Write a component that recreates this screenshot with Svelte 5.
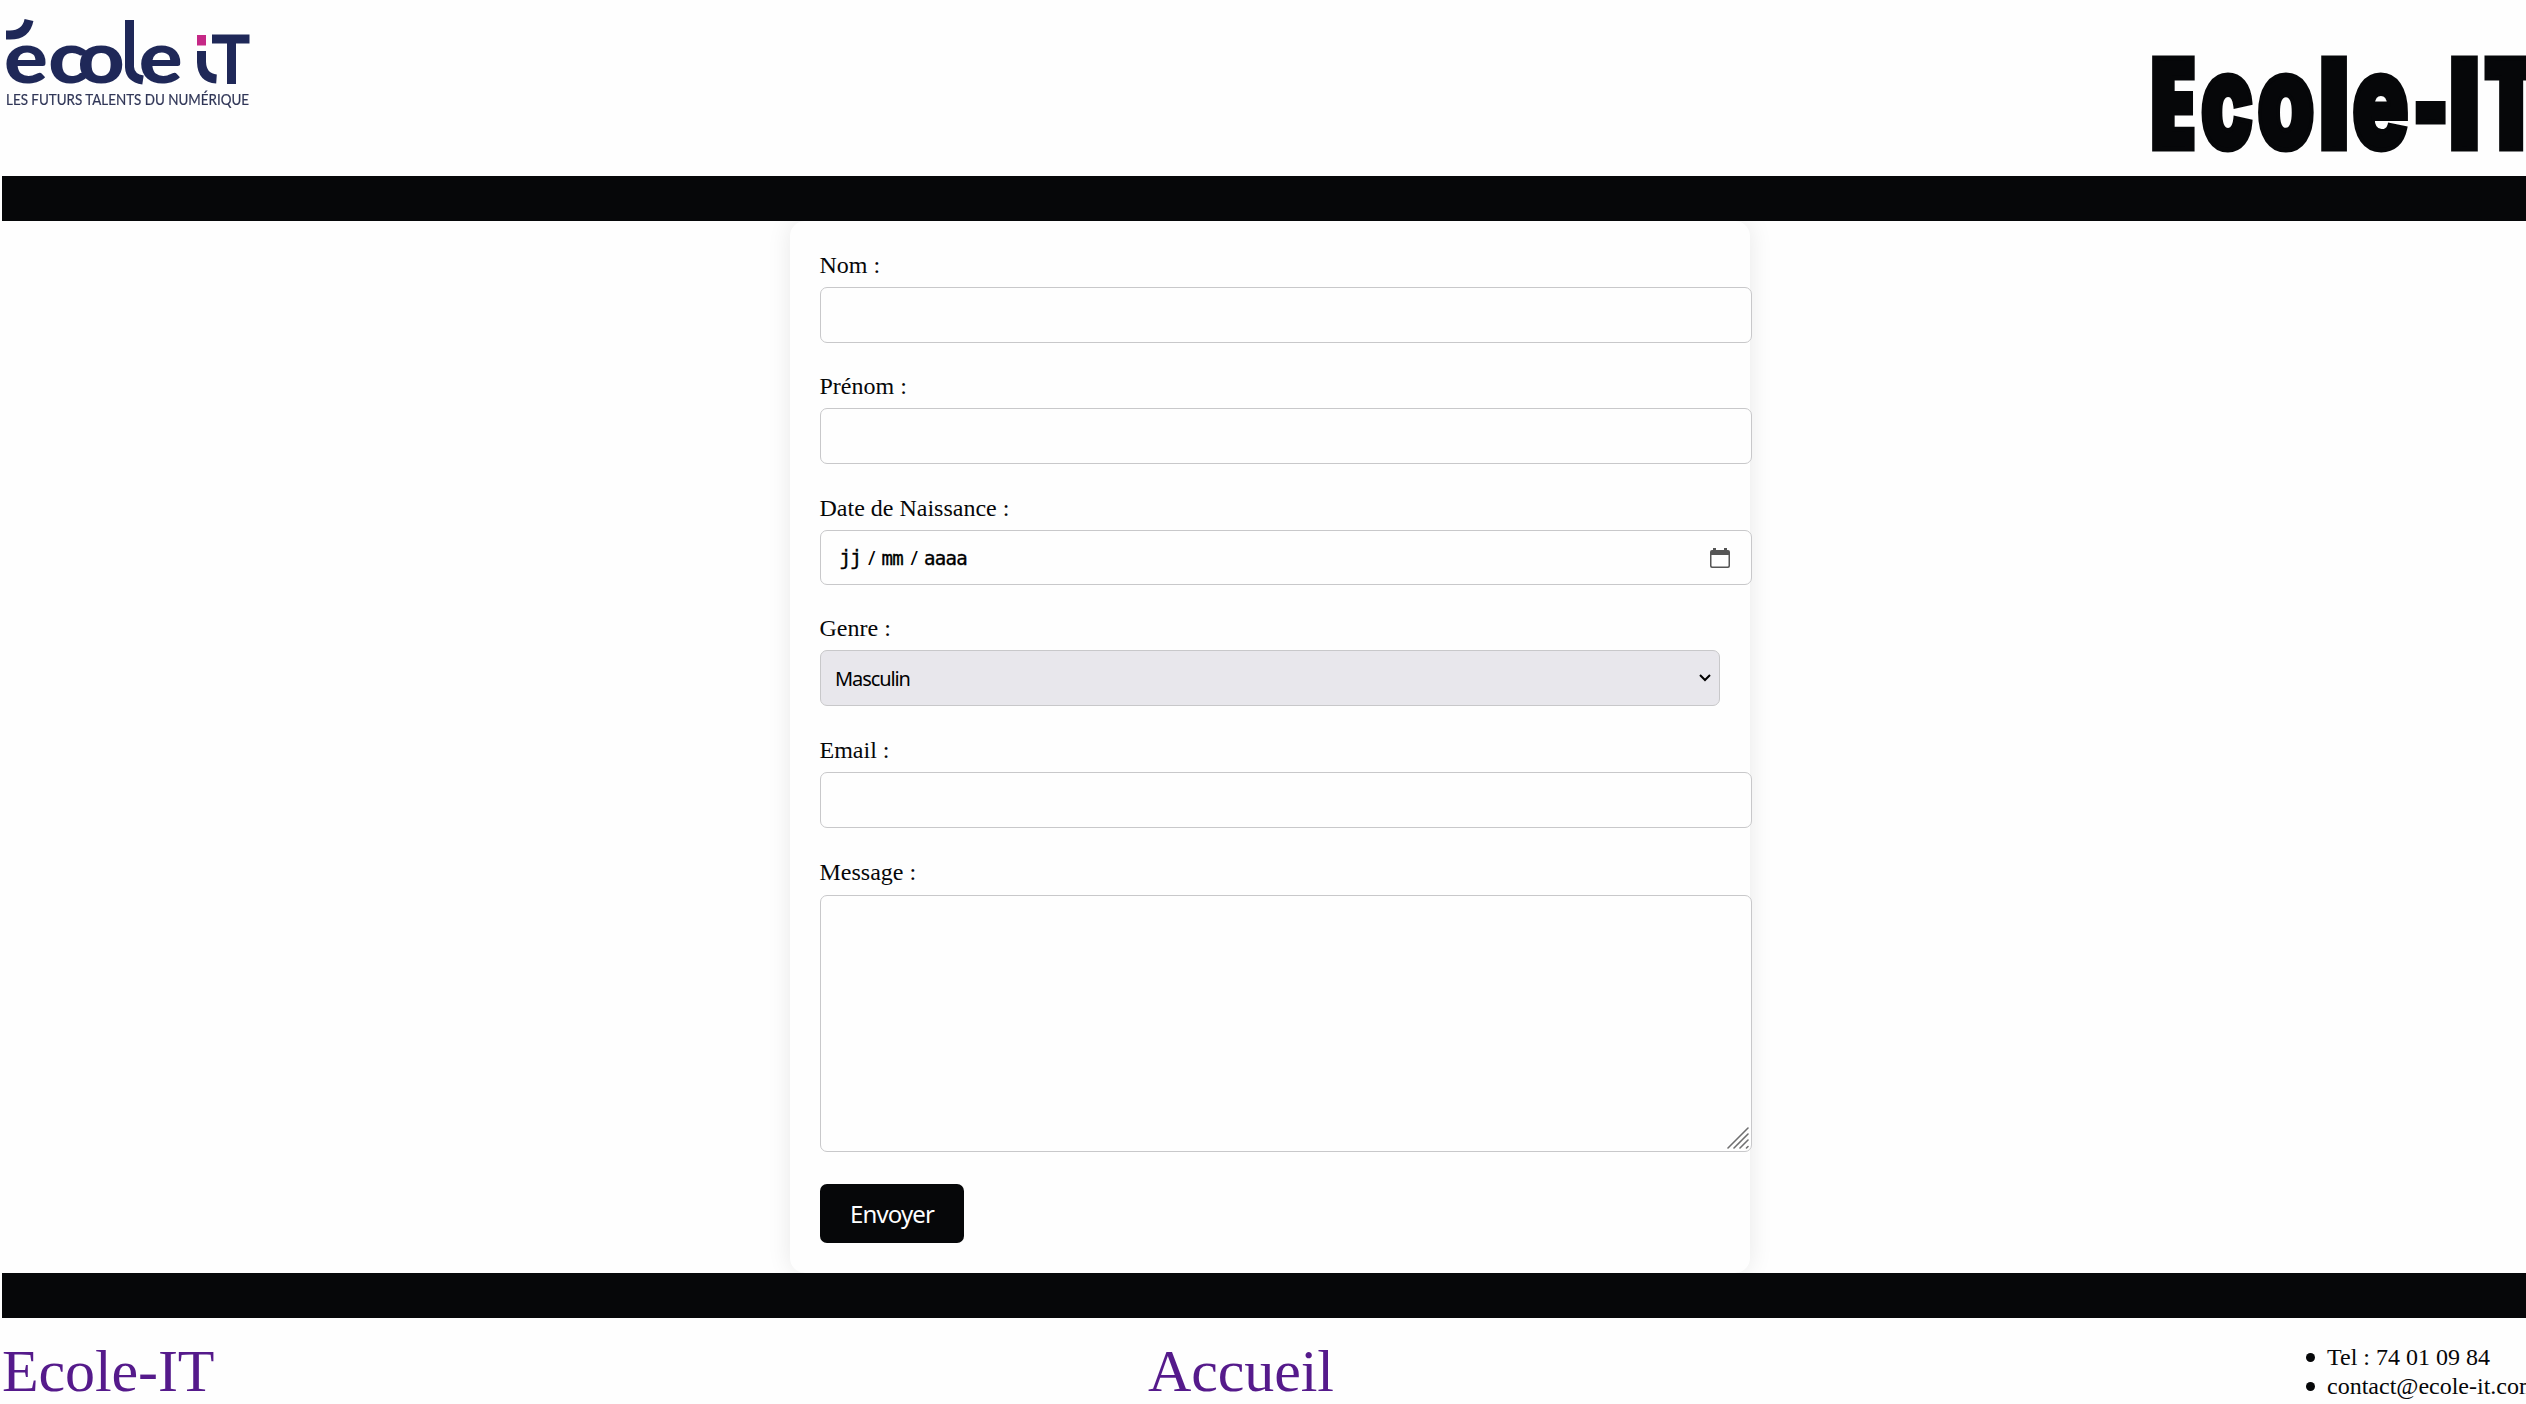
<script lang="ts">
  let nom = $state('');
  let prenom = $state('');
  let email = $state('');
  let message = $state('');

  // Each glyph of the heading carries its own condensation factor;
  // straight-stemmed glyphs are also thickened horizontally.
  const glyphs = [
    { ch: 'E', x: 14.5, sx: 0.49, size: 125, straight: true },
    { ch: 'c', x: 60.5, sx: 0.655, size: 134, straight: false },
    { ch: 'o', x: 117, sx: 0.69, size: 134, straight: false },
    { ch: 'l', x: 183, sx: 0.6, size: 125, straight: true },
    { ch: 'e', x: 212, sx: 0.7, size: 134, straight: false },
    { ch: '-', x: 277, sx: 0.46, size: 125, straight: true },
    { ch: 'I', x: 313, sx: 0.63, size: 125, straight: true },
    { ch: 'T', x: 348, sx: 0.54, size: 125, straight: true }
  ];
</script>

<div class="page">
  <header>
    <svg class="logo" viewBox="0 0 256 110" role="img" aria-label="école iT">
      <path class="accent" d="M6 35 H10 Q26 35 29 20" />
      <text class="letters" transform="scale(1.12 1)" y="83"><tspan x="3.5">e</tspan><tspan x="43">c</tspan><tspan x="69.2">o</tspan><tspan x="124">e</tspan></text>
      <path class="stem" d="M129.5 20 V67 Q130 78 143 80" />
      <rect class="dot" x="197" y="35" width="9" height="10.5" />
      <path class="stem" d="M201.5 51 V62 Q202 78 216.500 79" />
      <path class="stem" d="M212 39 H249.500 M231.500 39 V84" />
      <text class="tagline" x="6" y="104.500" textLength="243" lengthAdjust="spacingAndGlyphs">LES FUTURS TALENTS DU NUMÉRIQUE</text>
    </svg>
    <svg class="title" viewBox="0 0 386 176" role="img" aria-label="Ecole-IT">
      <filter id="widen" filterUnits="userSpaceOnUse" x="0" y="0" width="400" height="176" color-interpolation-filters="sRGB">
        <feMorphology operator="dilate" radius="4 0" />
      </filter>
      {#each glyphs as g}
        <g class:straight={g.straight}>
          <text transform="translate({g.x} 149) scale({g.sx} 1)" font-size={g.size}>{g.ch}</text>
        </g>
      {/each}
    </svg>
  </header>

  <div class="bar"></div>

  <main>
    <form>
      <label for="nom">Nom :</label>
      <input id="nom" bind:value={nom} />

      <label for="prenom">Prénom :</label>
      <input id="prenom" class="wide-gap" bind:value={prenom} />

      <label for="date">Date de Naissance :</label>
      <div id="date" class="date">
        <span class="jj">jj</span><span class="sep">/</span><span class="mm">mm</span><span class="sep">/</span><span class="aaaa">aaaa</span>
        <svg class="calendar" viewBox="0 0 20 20">
          <path d="M3 0h3v2h8V0h3v2h1q2 0 2 2v14q0 2-2 2H2q-2 0-2-2V4q0-2 2-2h1z M1.500 7v10.500q0 1 1 1h15q1 0 1-1V7z" fill-rule="evenodd" />
        </svg>
      </div>

      <label for="genre">Genre :</label>
      <div id="genre" class="select">
        <span>Masculin</span>
        <svg viewBox="0 0 12 8"><path d="M1 1l5 5 5-5" /></svg>
      </div>

      <label for="email">Email :</label>
      <input id="email" class="wide-gap" bind:value={email} />

      <label class="message-label" for="message">Message :</label>
      <div class="area">
        <textarea id="message" bind:value={message}></textarea>
        <svg class="grip" viewBox="0 0 22 22"><path d="M1 21L21 1M7 21L21 7M13 21L21 13M19.500 21L21 19.500" /></svg>
      </div>

      <button type="button">Envoyer</button>
    </form>
  </main>

  <div class="bar"></div>

  <footer>
    <a class="home" href="#top">Ecole-IT</a>
    <a class="welcome" href="#accueil">Accueil</a>
    <ul>
      <li>Tel : 74 01 09 84</li>
      <li>contact@ecole-it.com</li>
    </ul>
  </footer>
</div>

<style>
  :global(body) {
    background: #fefefe;
    overflow: hidden;
  }
  .page {
    width: 2526px;
    height: 1404px;
    overflow: hidden;
    font-family: 'Liberation Serif', serif;
    font-size: 24px;
    color: #060709;
  }
  header {
    height: 176px;
    display: flex;
    justify-content: space-between;
    align-items: flex-start;
  }
  .logo {
    width: 256px;
    height: 110px;
    filter: blur(0.5px);
  }
  .letters {
    font: 900 73px Lato, sans-serif;
    fill: #1f2858;
  }
  .accent,
  .stem {
    fill: none;
    stroke: #1f2858;
    stroke-width: 9;
  }
  .dot {
    fill: #c52886;
  }
  .tagline {
    font: 400 14.500px Lato, sans-serif;
    fill: #303657;
    stroke: #303657;
    stroke-width: 0.200;
  }
  .title {
    width: 386px;
    height: 176px;
  }
  .title .straight {
    filter: url(#widen);
  }
  .title text {
    font-family: Inter, sans-serif;
    font-weight: 900;
    fill: #060709;
    stroke: #060709;
    stroke-width: 5;
  }
  .bar {
    height: 45px;
    margin-left: 2px;
    background: #060709;
    position: relative;
  }
  main {
    height: 1052px;
    display: flex;
    padding-left: 790px;
  }
  form {
    box-sizing: border-box;
    width: 960px;
    height: 1052px;
    padding: 30px;
    border-radius: 15px;
    background: #fefefe;
    box-shadow: 0 0 24px rgba(0, 0, 0, 0.09);
    display: flex;
    flex-direction: column;
    align-items: flex-start;
  }
  label {
    line-height: 28px;
    margin: 0 0 8px -0.500px;
  }
  .message-label {
    margin-bottom: 9px;
  }
  input,
  .date,
  .select,
  textarea {
    box-sizing: border-box;
    width: 932px;
    height: 56px;
    flex: none;
    margin: 0 0 29px;
    border: 1px solid #c8c8ca;
    border-radius: 7px;
    background: #fefefe;
    font: 20px 'Noto Sans', sans-serif;
    outline: none;
  }
  input.wide-gap {
    margin-bottom: 30px;
  }
  .date {
    display: flex;
    align-items: center;
    height: 55px;
    padding: 0 21px 0 18px;
    font: 20px 'DejaVu Sans Mono', monospace;
    letter-spacing: -1.300px;
    color: #000;
  }
  .sep {
    width: 21px;
    text-align: center;
    font-family: 'Noto Sans', sans-serif;
  }
  .jj {
    font-size: 21px;
    letter-spacing: -1.900px;
    -webkit-text-stroke: 0.300px #000;
  }
  .mm,
  .aaaa {
    font-size: 19px;
    letter-spacing: -0.700px;
    -webkit-text-stroke: 0.400px #000;
  }
  .calendar {
    width: 20px;
    height: 20px;
    margin-left: auto;
    fill: #555;
  }
  .select {
    display: flex;
    align-items: center;
    justify-content: space-between;
    width: 900px;
    margin-bottom: 30px;
    padding: 0 8px 0 14px;
    background: #e8e7ec;
    color: #000;
    letter-spacing: -1.100px;
  }
  .select svg {
    width: 12px;
    height: 8px;
    fill: none;
    stroke: #000;
    stroke-width: 2;
  }
  .area {
    display: flex;
    position: relative;
  }
  textarea {
    height: 257px;
    margin: 0 0 32px;
    resize: none;
  }
  .grip {
    position: absolute;
    right: 3px;
    bottom: 35px;
    width: 22px;
    height: 22px;
    stroke: #6f6f70;
    stroke-width: 1.600;
    stroke-linecap: round;
  }
  button {
    width: 144px;
    height: 59px;
    padding: 0;
    border: 0;
    border-radius: 7px;
    background: #060709;
    color: #fefefe;
    font: 24px 'Noto Sans', sans-serif;
    letter-spacing: -0.900px;
  }
  footer {
    display: flex;
    height: 86px;
    align-items: flex-start;
    white-space: nowrap;
  }
  a {
    flex: none;
    color: #551a8b;
    font-size: 60px;
    line-height: 68px;
    text-decoration: none;
    padding-top: 19px;
    letter-spacing: -0.100px;
  }
  .home {
    width: 1146px;
    padding-left: 2px;
  }
  .welcome {
    width: 1156px;
  }
  ul {
    flex: none;
    list-style: none;
    margin: 0;
    padding: 25px 0 0;
  }
  li {
    display: flex;
    align-items: center;
    line-height: 29px;
    gap: 12px;
  }
  li::before {
    content: '';
    width: 9px;
    height: 9px;
    margin-left: 2px;
    border-radius: 50%;
    background: #060709;
  }
</style>
